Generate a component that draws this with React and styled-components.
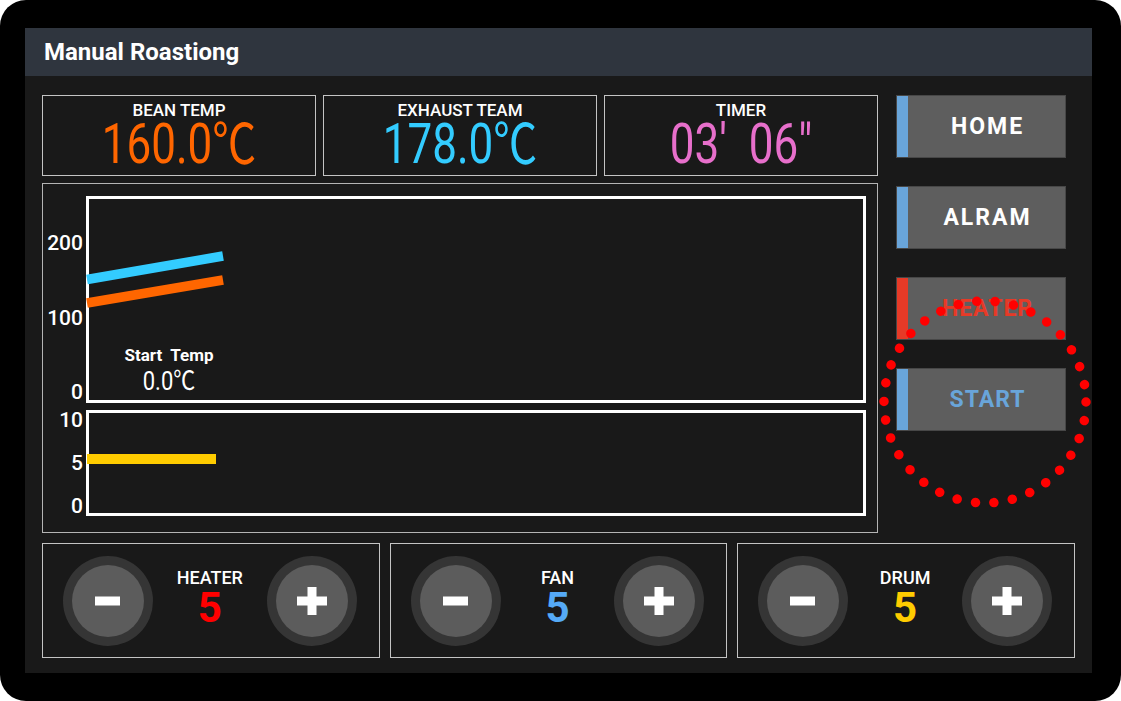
import styled, { createGlobalStyle } from "styled-components";

const GlobalStyle = createGlobalStyle`
  * { box-sizing: border-box; }
  body {
    margin: 0;
    background: #fff;
    font-family: Roboto, "Noto Sans CJK KR", sans-serif;
  }
`;

const Frame = styled.div`
  width: 1121px;
  height: 701px;
  background: #000;
  border-radius: 26px;
  padding: 28px 29px 28px 25px;
`;

const Panel = styled.div`
  height: 100%;
  display: flex;
  flex-direction: column;
  background: #191919;
`;

const Header = styled.header`
  height: 48px;
  flex: none;
  display: flex;
  align-items: center;
  padding-left: 19px;
  background: #2f353e;
  color: #fff;
  font-size: 24px;
  font-weight: 700;
`;

const Body = styled.div`
  flex: 1;
  display: flex;
  flex-direction: column;
  gap: 10px;
  padding: 19px 17px 15px;
`;

const Upper = styled.div`
  height: 438px;
  flex: none;
  display: grid;
  grid-template-columns: 836px 170px;
  column-gap: 18px;
`;

const Main = styled.div`
  display: flex;
  flex-direction: column;
  gap: 7px;
  min-height: 0;
`;

const Readouts = styled.div`
  height: 81px;
  flex: none;
  display: grid;
  grid-template-columns: repeat(3, 1fr);
  gap: 7px;
`;

const Readout = styled.div`
  border: 1px solid #c4c4c4;
  display: flex;
  flex-direction: column;
  align-items: center;
  padding-top: 4px;
`;

const ReadoutLabel = styled.div`
  color: #fff;
  font-size: 17px;
  font-weight: 500;
  line-height: 20px;
`;

const ReadoutValue = styled.div`
  margin-top: 7px;
  color: ${(p) => p.color};
  font-size: 44px;
  line-height: 34px;
  white-space: pre;
  transform: scaleY(1.25);
`;

const ChartBox = styled.div`
  height: 350px;
  flex: none;
  display: flex;
  flex-direction: column;
  gap: 7px;
  border: 1px solid #b4b4b4;
  padding: 12px 11px 0 0;
`;

const ChartRow = styled.div`
  display: grid;
  grid-template-columns: 43px 1fr;
  height: ${(p) => p.h}px;
  flex: none;
`;

const Axis = styled.div`
  display: flex;
  flex-direction: column;
  justify-content: space-between;
  align-items: flex-end;
  padding: ${(p) => p.pad || "0"};
  padding-right: 3px;
`;

const Tick = styled.span`
  color: #fff;
  font-size: 21px;
  font-weight: 500;
  line-height: 20px;
`;

const Plot = styled.div`
  position: relative;
  height: ${(p) => p.h}px;
  border: 3px solid #fff;

  svg {
    display: block;
    width: 100%;
    height: 100%;
    overflow: visible;
  }
`;

const StartTemp = styled.div`
  position: absolute;
  left: 30px;
  top: 146px;
  width: 100px;
  text-align: center;
  color: #fff;
`;

const StartLabel = styled.div`
  font-size: 17px;
  font-weight: 700;
  line-height: 20px;
  white-space: pre;
`;

const StartValue = styled.div`
  margin-top: 8px;
  font-size: 22px;
  line-height: 18px;
  transform: scaleY(1.2);
`;

const Side = styled.div`
  position: relative;
  display: flex;
  flex-direction: column;
  gap: 28px;
`;

const NavButton = styled.div`
  height: 63px;
  display: flex;
  background: #5e5e5e;
  border: 1px solid #474747;
`;

const Accent = styled.div`
  width: 11px;
  background: ${(p) => p.color};
`;

const NavLabel = styled.div`
  flex: 1;
  display: flex;
  align-items: center;
  justify-content: center;
  padding-left: 2px;
  color: ${(p) => p.color};
  font-size: 23px;
  font-weight: 700;
  letter-spacing: ${(p) => p.spacing || "1px"};
`;

const Marker = styled.svg`
  position: absolute;
  left: -21px;
  top: 197px;
  width: 220px;
  height: 220px;
  pointer-events: none;
`;

const Controls = styled.div`
  height: 115px;
  flex: none;
  display: grid;
  grid-template-columns: repeat(3, 1fr);
  gap: 10px;
`;

const Control = styled.div`
  border: 1px solid #c4c4c4;
  display: flex;
  align-items: center;
  justify-content: space-between;
  padding: 0 22px 0 20px;
`;

const RoundButton = styled.div`
  width: 90px;
  height: 90px;
  border-radius: 50%;
  background: #353535;
  display: grid;
  place-items: center;
`;

const RoundInner = styled.div`
  width: 72px;
  height: 72px;
  border-radius: 50%;
  background: #5c5c5c;
  display: grid;
  place-items: center;
`;

const Level = styled.div`
  display: flex;
  flex-direction: column;
  align-items: center;
  padding-bottom: 5px;
`;

const LevelLabel = styled.div`
  color: #fff;
  font-size: 18px;
  font-weight: 500;
  line-height: 20px;
`;

const LevelValue = styled.div`
  color: ${(p) => p.color};
  font-size: 42px;
  font-weight: 700;
  line-height: 40px;
`;

const MinusIcon = () => (
  <svg width="30" height="30" viewBox="0 0 30 30">
    <rect x="2" y="10.5" width="25" height="9" fill="#fff" />
  </svg>
);

const PlusIcon = () => (
  <svg width="30" height="30" viewBox="0 0 30 30">
    <rect x="0" y="10.5" width="30" height="9" fill="#fff" />
    <rect x="10.5" y="1" width="9" height="28" fill="#fff" />
  </svg>
);

const readouts = [
  { label: "BEAN TEMP", value: "160.0℃", color: "#ff6600" },
  { label: "EXHAUST TEAM", value: "178.0℃", color: "#33ccff" },
  { label: "TIMER", value: "03'  06\"", color: "#e76fcb" },
];

const navs = [
  { label: "HOME", accent: "#69a5da", color: "#fff", spacing: "2px" },
  { label: "ALRAM", accent: "#69a5da", color: "#fff", spacing: "2px" },
  { label: "HEATER", accent: "#e63a27", color: "#e63a27" },
  { label: "START", accent: "#69a5da", color: "#69a5da" },
];

const levels = [
  { label: "HEATER", value: 5, color: "#ff0000" },
  { label: "FAN", value: 5, color: "#55aaf6" },
  { label: "DRUM", value: 5, color: "#ffcc00" },
];

export default function App() {
  return (
    <>
      <GlobalStyle />
      <Frame>
        <Panel>
          <Header>Manual Roastiong</Header>
          <Body>
            <Upper>
              <Main>
                <Readouts>
                  {readouts.map((r) => (
                    <Readout key={r.label}>
                      <ReadoutLabel>{r.label}</ReadoutLabel>
                      <ReadoutValue color={r.color}>{r.value}</ReadoutValue>
                    </Readout>
                  ))}
                </Readouts>
                <ChartBox>
                  <ChartRow h={207}>
                    <Axis pad="37px 0 1px">
                      <Tick>200</Tick>
                      <Tick>100</Tick>
                      <Tick>0</Tick>
                    </Axis>
                    <Plot h={207}>
                      <svg>
                        <line x1="-2" y1="80.5" x2="134" y2="57" stroke="#33ccff" strokeWidth="9.5" />
                        <line x1="-2" y1="104" x2="134" y2="81" stroke="#ff6600" strokeWidth="9.5" />
                      </svg>
                      <StartTemp>
                        <StartLabel>{"Start  Temp"}</StartLabel>
                        <StartValue>0.0℃</StartValue>
                      </StartTemp>
                    </Plot>
                  </ChartRow>
                  <ChartRow h={106}>
                    <Axis>
                      <Tick>10</Tick>
                      <Tick>5</Tick>
                      <Tick>0</Tick>
                    </Axis>
                    <Plot h={106}>
                      <svg>
                        <line x1="-2" y1="46" x2="127" y2="46" stroke="#ffcc00" strokeWidth="10" />
                      </svg>
                    </Plot>
                  </ChartRow>
                </ChartBox>
              </Main>
              <Side>
                {navs.map((n) => (
                  <NavButton key={n.label}>
                    <Accent color={n.accent} />
                    <NavLabel color={n.color} spacing={n.spacing}>
                      {n.label}
                    </NavLabel>
                  </NavButton>
                ))}
                <Marker viewBox="0 0 220 220">
                  <circle
                    cx="110"
                    cy="110"
                    r="101"
                    fill="none"
                    stroke="#ff0000"
                    strokeWidth="9.5"
                    strokeLinecap="round"
                    strokeDasharray="0.01 18.66"
                  />
                </Marker>
              </Side>
            </Upper>
            <Controls>
              {levels.map((l) => (
                <Control key={l.label}>
                  <RoundButton>
                    <RoundInner>
                      <MinusIcon />
                    </RoundInner>
                  </RoundButton>
                  <Level>
                    <LevelLabel>{l.label}</LevelLabel>
                    <LevelValue color={l.color}>{l.value}</LevelValue>
                  </Level>
                  <RoundButton>
                    <RoundInner>
                      <PlusIcon />
                    </RoundInner>
                  </RoundButton>
                </Control>
              ))}
            </Controls>
          </Body>
        </Panel>
      </Frame>
    </>
  );
}
